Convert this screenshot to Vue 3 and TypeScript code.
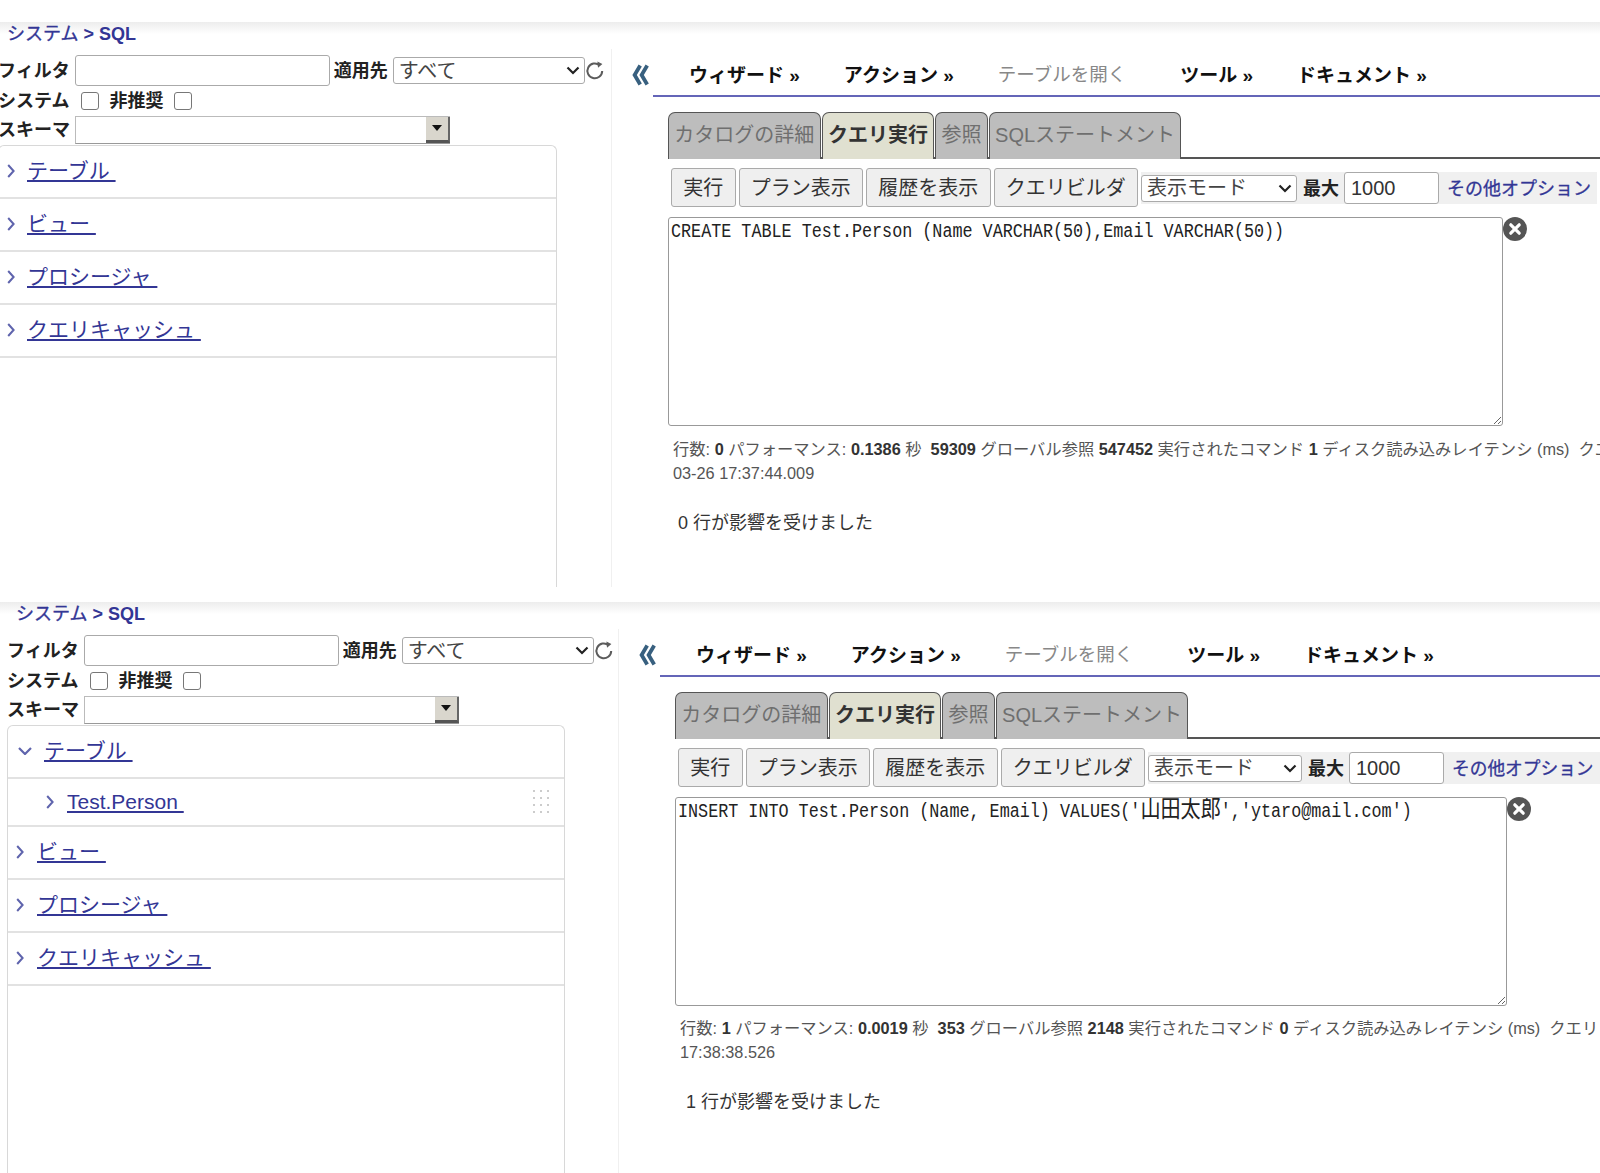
<script setup lang="ts">
interface Panel {
  id: string;
  sql: { before: string; cjk?: string; after?: string };
  rows: number; perf: string; globals: string; commands: string; disk: string;
  tail: string; line2: string; affected: string; open: boolean;
}
const panels: Panel[] = [
  { id: 'one', sql: { before: 'CREATE TABLE Test.Person (Name VARCHAR(50),Email VARCHAR(50))' }, rows: 0, perf: '0.1386', globals: '59309', commands: '547452', disk: '1', tail: 'クエリ', line2: '03-26 17:37:44.009', affected: '0 行が影響を受けました', open: false },
  { id: 'two', sql: { before: "INSERT INTO Test.Person (Name, Email) VALUES('", cjk: '山田太郎', after: "','ytaro@mail.com')" }, rows: 1, perf: '0.0019', globals: '353', commands: '2148', disk: '0', tail: 'クエリ', line2: '17:38:38.526', affected: '1 行が影響を受けました', open: true },
];
const groups = ['テーブル', 'ビュー', 'プロシージャ', 'クエリキャッシュ'];
const menus = [
  { t: 'ウィザード »', on: true }, { t: 'アクション »', on: true }, { t: 'テーブルを開く', on: false },
  { t: 'ツール »', on: true }, { t: 'ドキュメント »', on: true },
];
const tabs = [
  { t: 'カタログの詳細', on: false }, { t: 'クエリ実行', on: true }, { t: '参照', on: false }, { t: 'SQLステートメント', on: false },
];
const buttons = ['実行', 'プラン表示', '履歴を表示', 'クエリビルダ'];
const dots = Array.from({ length: 12 }, (_, i) => i);
</script>

<template>
  <div class="page">
    <section v-for="p in panels" :key="p.id" class="panel" :class="p.id">
      <div class="shade"></div>
      <div class="cols">
        <aside class="left">
          <div class="crumb"><span class="c1">システム</span><span class="c2"> &gt; SQL</span></div>
          <div class="side">
            <div class="filter-row">
              <label class="lab">フィルタ</label>
              <input class="txt" type="text" />
              <label class="lab apply">適用先</label>
              <select class="sel all"><option>すべて</option></select>
              <svg class="refresh" viewBox="0 0 20 20" width="20" height="20"><path d="M14.6 5.2A7.4 7.4 0 1 0 17.2 11" fill="none" stroke="#5c5c5c" stroke-width="2"/><path d="M12.4 1.4l.6 6.4 4.4-3.800z" fill="#5c5c5c"/></svg>
            </div>
            <div class="check-row">
              <label class="lab">システム</label>
              <input class="cb first" type="checkbox" />
              <label class="lab dep">非推奨</label>
              <input class="cb" type="checkbox" />
            </div>
            <div class="schema-row">
              <label class="lab">スキーマ</label>
              <div class="combo"><span class="combo-btn"><i></i></span></div>
            </div>
            <div class="tree">
              <template v-for="(g, i) in groups" :key="g">
                <div class="row" :class="{ opened: p.open && i === 0 }">
                  <svg v-if="p.open && i === 0" class="chev down" viewBox="0 0 14 8" width="14" height="8"><path d="M1 1l6 6 6-6" fill="none" stroke="#5f64ad" stroke-width="2.200"/></svg>
                  <svg v-else class="chev" viewBox="0 0 8 14" width="8" height="14"><path d="M1.200 1l5.400 6-5.400 6" fill="none" stroke="#5f64ad" stroke-width="2"/></svg>
                  <a class="link">{{ g }}&nbsp;</a>
                </div>
                <div v-if="p.open && i === 0" class="sub">
                  <svg class="chev" viewBox="0 0 8 14" width="8" height="14"><path d="M1.200 1l5.400 6-5.400 6" fill="none" stroke="#5f64ad" stroke-width="2"/></svg>
                  <a class="link small">Test.Person&nbsp;</a>
                  <div class="dots"><i v-for="d in dots" :key="d"></i></div>
                </div>
              </template>
            </div>
          </div>
        </aside>
        <main class="right">
          <div class="menu-row">
            <svg class="collapse" viewBox="0 0 20 22" width="20" height="22"><path d="M9.200 1.500L3.600 11l5.600 9.500M16.200 1.500L10.600 11l5.600 9.500" fill="none" stroke="#38607f" stroke-width="3.800"/></svg>
            <nav class="menu">
              <span v-for="m in menus" :key="m.t" class="mi" :class="{ off: !m.on }">{{ m.t }}</span>
            </nav>
          </div>
          <div class="tabs">
            <div v-for="t in tabs" :key="t.t" class="tab" :class="{ active: t.on }">{{ t.t }}</div>
          </div>
          <div class="tools">
            <button v-for="b in buttons" :key="b" class="btn">{{ b }}</button>
            <div class="strip">
              <select class="sel mode"><option>表示モード</option></select>
              <b class="max">最大</b>
              <input class="num" type="text" value="1000" />
              <a class="more">その他オプション</a>
            </div>
          </div>
          <div class="editor">
            <div class="sql"><div class="sql-text">{{ p.sql.before }}<span v-if="p.sql.cjk" class="cjk">{{ p.sql.cjk }}</span>{{ p.sql.after }}</div></div>
            <svg class="close" viewBox="0 0 24 24" width="24" height="24"><circle cx="12" cy="12" r="12" fill="#555"/><path d="M7.800 7.800l8.400 8.400M16.200 7.800l-8.400 8.400" stroke="#fff" stroke-width="3.200" stroke-linecap="round"/></svg>
          </div>
          <div class="stats">行数: <b>{{ p.rows }}</b> パフォーマンス: <b>{{ p.perf }}</b> 秒 &nbsp;<b>{{ p.globals }}</b> グローバル参照 <b>{{ p.commands }}</b> 実行されたコマンド <b>{{ p.disk }}</b> ディスク読み込みレイテンシ (ms) &nbsp;{{ p.tail }}</div>
          <div class="stats second">{{ p.line2 }}</div>
          <div class="affected">{{ p.affected }}</div>
        </main>
      </div>
    </section>
  </div>
</template>

<style>
html, body { margin: 0; background: #fff; overflow: hidden; }
</style>

<style scoped>
.page {
  width: 1600px; height: 1173px; overflow: hidden; background: #fff;
  font-family: "Liberation Sans", "Noto Sans CJK JP", sans-serif; color: #222;
}
.panel { position: relative; box-sizing: border-box; overflow: hidden; }
.panel.one { height: 587px; padding-top: 22px; margin-left: -9px; width: 1609px; }
.panel.two { height: 586px; padding-top: 15px; width: 1600px; }
.shade { height: 12px; margin-bottom: -12px; background: linear-gradient(#ededed, #fff); }
.cols { display: flex; height: 100%; }
.left { width: 621px; flex: none; box-sizing: border-box; height: 100%; position: relative; }
.two .left { width: 619px; }
.left::after { content: ""; position: absolute; right: 0; top: 27px; bottom: 0; border-right: 1px solid #f0f0f0; }
.crumb { height: 24px; line-height: 24px; padding-left: 16px; font-size: 18px; color: #333695; white-space: pre; position: relative; }
.c1 { -webkit-text-stroke: 0.35px #333695; }
.c2 { font-weight: 700; }
.side { padding-left: 7px; }
.lab { font-size: 18px; font-weight: 700; color: #222; line-height: 24px; white-space: nowrap; }
.filter-row { display: flex; align-items: center; height: 31px; margin-top: 9px; }
.txt { width: 255px; height: 31px; margin-left: 5px; box-sizing: border-box; border: 1.5px solid #aaa; border-radius: 3px; background: #fff; padding: 0; }
.apply { margin-left: 4px; }
.sel {
  appearance: none; box-sizing: border-box; border: 1.5px solid #aaa; border-radius: 3px; color: #444; font-family: inherit; font-size: 20px; padding: 0 5px;
  background: #fff url("data:image/svg+xml,%3Csvg xmlns='http://www.w3.org/2000/svg' width='14' height='9'%3E%3Cpath d='M1.500 1.500l5.500 5.500 5.500-5.500' fill='none' stroke='%23222' stroke-width='2.200'/%3E%3C/svg%3E") no-repeat right 4px center;
}
.all { width: 192px; height: 27px; margin-left: 5px; }
.refresh { margin-left: 0; flex: none; margin-top: -2px; }
.check-row { display: flex; align-items: center; height: 29px; margin-top: 0; }
.cb { appearance: none; width: 18px; height: 18px; box-sizing: border-box; margin: 0 0 0 11px; border: 1.5px solid #777; border-radius: 3px; background: #fff; }
.cb.first { margin-left: 12px; }
.dep { margin-left: 10px; }
.schema-row { display: flex; align-items: center; height: 29px; }
.combo { width: 375px; height: 28px; margin-left: 5px; box-sizing: border-box; border: 1.5px solid #bbb; border-bottom-color: #999; border-right: 0; display: flex; justify-content: flex-end; background: #fff; }
.combo-btn { width: 24px; background: #d9d6cd; border-bottom: 3px solid #555; border-right: 2px solid #666; box-sizing: border-box; display: flex; align-items: center; justify-content: center; }
.combo-btn i { width: 0; height: 0; border-left: 5px solid transparent; border-right: 5px solid transparent; border-top: 6px solid #111; }
.tree { width: 558px; height: 480px; box-sizing: border-box; margin-top: 1px; border: 1px solid #d8d8d8; border-bottom: 0; border-radius: 6px 6px 0 0; }
.one .tree { width: 559px; }
.row { height: 53px; box-sizing: border-box; border-bottom: 2px solid #e2e2e2; display: flex; align-items: center; padding-left: 8px; padding-bottom: 2px; }
.row .chev { flex: none; margin-right: 13px; }
.one .row .chev { margin-right: 12px; }
.row.opened { padding-left: 10px; }
.row.opened .chev { margin-right: 12px; }
.sub { height: 48px; box-sizing: border-box; border-bottom: 2px solid #e2e2e2; display: flex; align-items: center; padding-left: 38px; position: relative; }
.sub .chev { flex: none; margin-right: 13px; }
.link { font-size: 21px; line-height: 30px; color: #333695; text-decoration: underline; white-space: nowrap; }
.dots { position: absolute; right: 15px; top: 11px; display: grid; grid-template-columns: repeat(3, 2px); grid-auto-rows: 2px; gap: 5px 5px; }
.dots i { background: #ccc; }
.right { flex: 1; min-width: 0; overflow: hidden; padding-top: 27px; }
.menu-row { display: flex; height: 48px; box-sizing: border-box; }
.collapse { flex: none; margin: 15px 2px 0 19px; }
.menu { flex: 1; display: flex; align-items: center; border-bottom: 2px solid #6465b8; padding: 2px 0 0 36px; height: 48px; box-sizing: border-box; }
.mi { font-size: 19px; font-weight: 700; color: #111; margin-right: 44px; white-space: nowrap; }
.mi.off { font-size: 18.5px; font-weight: 400; color: #888; margin-right: 54px; }
.tabs { display: flex; gap: 1px; margin-top: 15px; margin-left: 56px; height: 47px; box-sizing: border-box; border-bottom: 2px solid #555; }
.tab { height: 47px; box-sizing: border-box; padding: 0 5.3px; line-height: 44px; font-size: 20px; background: #bdbdbd; color: #6f6f6f; border: 1.5px solid #555; border-bottom: 0; border-radius: 7px 7px 0 0; white-space: nowrap; }
.tab.active { background: #e0e0d0; color: #333; font-weight: 700; }
.tools { display: flex; align-items: flex-start; margin-top: 9px; margin-left: 59px; height: 39px; }
.btn { height: 39px; margin-right: 3px; padding: 0 11.25px 2px; font-family: inherit; font-size: 20px; color: #333; background: #efefef; border: 1.5px solid #aaa; border-radius: 3px; white-space: nowrap; }
.strip { flex: 1; display: flex; align-items: center; height: 32px; margin-top: 4px; background: #f0f0f0; padding-left: 0; margin-right: 3px; }
.two .strip { margin-right: 0; }
.mode { width: 156px; height: 27px; }
.two .mode { width: 154px; }
.max { font-size: 18px; font-weight: 700; color: #222; margin-left: 6px; margin-bottom: 3px; white-space: nowrap; }
.num { width: 95px; height: 32px; box-sizing: border-box; margin-left: 5px; border: 1.5px solid #aaa; border-radius: 3px; padding: 0 6px; font-family: inherit; font-size: 20px; color: #333; }
.more { margin-left: 8px; margin-bottom: 3px; font-size: 18px; color: #333695; white-space: nowrap; -webkit-text-stroke: 0.3px #333695; }
.two .more { font-size: 17.7px; }
.editor { display: flex; align-items: flex-start; margin-top: 10px; margin-left: 56px; }
.sql { width: 835px; height: 209px; box-sizing: border-box; border: 1.5px solid #999; border-radius: 3px; padding: 2px; overflow: auto; resize: both; background: #fff; flex: none; }
.two .sql { width: 832px; }
.sql-text { font-family: "Liberation Mono", "Noto Sans CJK JP", monospace; font-size: 20px; line-height: 24px; color: #222; white-space: pre; transform: scaleX(0.8375); transform-origin: 0 0; }
.cjk { font-size: 24px; line-height: 0; font-family: "Noto Sans CJK JP", sans-serif; }
.close { flex: none; margin: 0; }
.stats { margin-top: 11px; margin-left: 61px; font-size: 16.3px; line-height: 24px; color: #555; white-space: nowrap; }
.two .stats { margin-top: 10px; }
.stats.second, .two .stats.second { margin-top: 0; }
.stats b { color: #333; }
.affected { margin-top: 26px; margin-left: 66px; font-size: 18px; line-height: 24px; color: #333; white-space: nowrap; }
.two .affected { margin-left: 67px; }
</style>
